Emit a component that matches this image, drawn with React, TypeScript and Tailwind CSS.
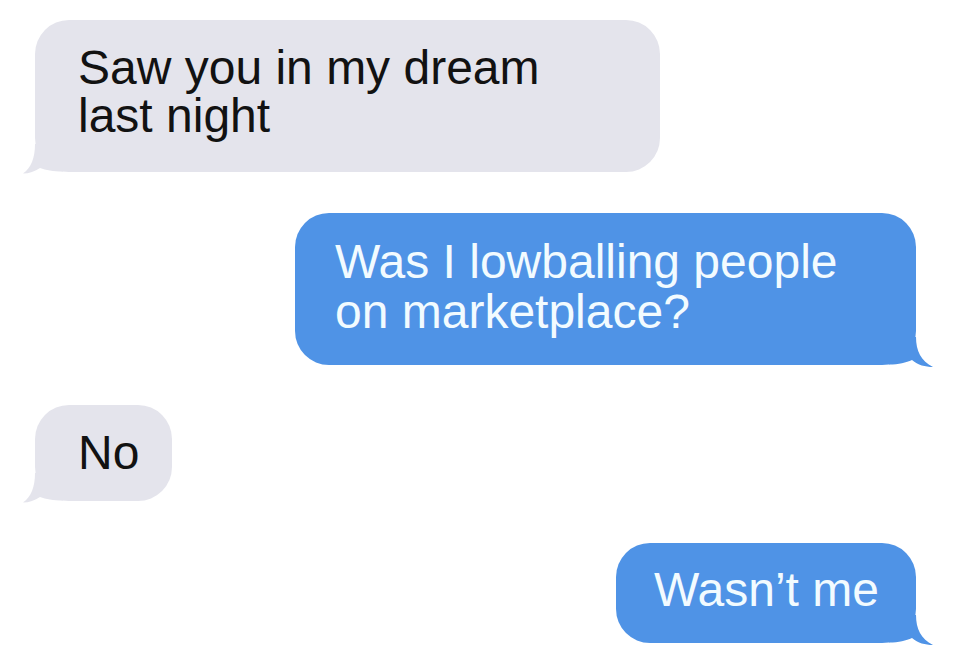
import React from "react";

type Side = "left" | "right";

function Tail({ side, color }: { side: Side; color: string }) {
  if (side === "left") {
    return (
      <svg
        className="absolute left-[-12px] bottom-[-2px]"
        width="40"
        height="30"
        viewBox="0 0 40 30"
        aria-hidden="true"
      >
        <path
          d="M12 0 C12 14 8 24 0 29.5 C6 29.5 12 27.5 17 24 C23 26 30 27.5 40 27.5 L40 0 Z"
          fill={color}
        />
      </svg>
    );
  }
  return (
    <svg
      className="absolute right-[-17px] bottom-[-2px] -scale-x-100"
      width="44"
      height="30"
      viewBox="0 0 44 30"
      aria-hidden="true"
    >
      <path
        d="M17 0 C17 14 12 24 0 30 C8 30 15 28 21 23 C27 25.5 34 27.5 44 27.5 L44 0 Z"
        fill={color}
      />
    </svg>
  );
}

function Bubble({
  side,
  className,
  children,
}: {
  side: Side;
  className: string;
  children: React.ReactNode;
}) {
  const gray = side === "left";
  return (
    <div
      className={`relative rounded-[34px] text-[48px] ${
        gray
          ? "bg-[#e4e4ec] text-[#121212] leading-[48px]"
          : "bg-[#4f93e6] text-[#f2fbff] leading-[50px]"
      } ${className}`}
    >
      <Tail side={side} color={gray ? "#e4e4ec" : "#4f93e6"} />
      <p className="relative">{children}</p>
    </div>
  );
}

export default function App() {
  return (
    <div
      className="w-[960px] h-[663px] bg-white overflow-hidden flex flex-col pt-[20px] pl-[35px] pr-[44px]"
      style={{ fontFamily: '"Liberation Sans", Arial, sans-serif' }}
    >
      <Bubble side="left" className="self-start w-[625px] h-[152px] pl-[43px] pt-[24px]">
        Saw you in my dream
        <br />
        last night
      </Bubble>

      <Bubble side="right" className="self-end w-[621px] h-[152px] mt-[41px] pl-[40px] pt-[24px]">
        Was I lowballing people
        <br />
        on marketplace?
      </Bubble>

      <Bubble side="left" className="self-start w-[137px] h-[96px] mt-[40px] pl-[43px] pt-[24px]">
        No
      </Bubble>

      <Bubble side="right" className="self-end w-[300px] h-[100px] mt-[42px] pl-[38px] pt-[22px]">
        Wasn’t me
      </Bubble>
    </div>
  );
}
